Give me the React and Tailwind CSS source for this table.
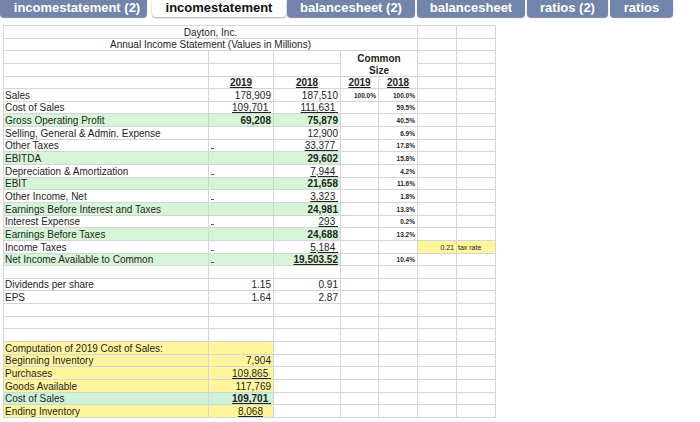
import React from 'react';

const GR = 'bg-[#d6f5d6]';
const GR2 = 'bg-[#cdf2d9]';
const YL = 'bg-[#fef59c]';

const tabs = [
  { t: 'incomestatement (2)', w: 'w-[147px] pl-[7px]', active: false },
  { t: 'incomestatement', w: 'w-[134px] ml-[5px]', active: true },
  { t: 'balancesheet (2)', w: 'w-[128px] ml-[1px]', active: false },
  { t: 'balancesheet', w: 'w-[108px] ml-[2px]', active: false },
  { t: 'ratios (2)', w: 'w-[81px] ml-[2px]', active: false },
  { t: 'ratios', w: 'w-[63px] ml-[2px]', active: false },
];

function Num({ t, b, u }) {
  return (
    <span className={`${b ? 'font-bold' : ''} ${u ? 'underline underline-offset-[1px] decoration-[#222]' : ''}`}>
      {t}
      {u ? '\u00a0' : ''}
    </span>
  );
}

function Pct({ t }) {
  return <span className="text-[6.5px] font-bold leading-[8px] pb-[1px]">{t}</span>;
}

function Dash() {
  return <span className="ml-[2px] mb-[2px] w-[3px] h-px bg-[#555]" />;
}

const E = (bg = '') => ({ bg });
const L = (t, bg = '') => ({ c: t, cls: 'pl-[1px]', bg });
const R = (c, bg = '') => ({ c, cls: 'justify-end pr-[2px]', bg });
const C = (c, bg = '') => ({ c, cls: 'justify-center', bg });
const D = (bg = '') => ({ c: <Dash />, bg });

const year = (y) => <span className="font-bold underline underline-offset-[1px]">{y}</span>;

function incomeRow(label, b, c, d, e, green) {
  const bg = green ? GR : '';
  return [
    L(label, bg),
    b === 'dash' ? D(bg) : b ? R(b, bg) : E(bg),
    c ? R(c, bg) : E(bg),
    d ? R(<Pct t={d} />) : E(),
    e ? R(<Pct t={e} />) : E(),
    E(),
    E(),
  ];
}

const empty = () => [E(), E(), E(), E(), E(), E(), E()];

const rows = [
  [{ span: 'col-span-5', c: 'Dayton, Inc.', cls: 'justify-center' }, E(), E()],
  [{ span: 'col-span-5', c: 'Annual Income Statement (Values in Millions)', cls: 'justify-center' }, E(), E()],
  [E(), E(), E(), { span: 'col-span-2', c: <span className="font-bold">Common</span>, cls: 'justify-center', nob: true }, E(), E()],
  [E(), E(), E(), { span: 'col-span-2', c: <span className="font-bold">Size</span>, cls: 'justify-center' }, E(), E()],
  [E(), C(year('2019')), C(year('2018')), C(year('2019')), C(year('2018')), E(), E()],
  incomeRow('Sales', <Num t="178,909" />, <Num t="187,510" />, '100.0%', '100.0%'),
  incomeRow('Cost of Sales', <Num t="109,701" u />, <Num t="111,631" u />, null, '59.5%'),
  incomeRow('Gross Operating Profit', <Num t="69,208" b />, <Num t="75,879" b />, null, '40.5%', true),
  incomeRow('Selling, General & Admin. Expense', null, <Num t="12,900" />, null, '6.9%'),
  incomeRow('Other Taxes', 'dash', <Num t="33,377" u />, null, '17.8%'),
  incomeRow('EBITDA', null, <Num t="29,602" b />, null, '15.8%', true),
  incomeRow('Depreciation & Amortization', 'dash', <Num t="7,944" u />, null, '4.2%'),
  incomeRow('EBIT', null, <Num t="21,658" b />, null, '11.6%', true),
  incomeRow('Other Income, Net', 'dash', <Num t="3,323" u />, null, '1.8%'),
  incomeRow('Earnings Before Interest and Taxes', null, <Num t="24,981" b />, null, '13.3%', true),
  incomeRow('Interest Expense', 'dash', <Num t="293" u />, null, '0.2%'),
  incomeRow('Earnings Before Taxes', null, <Num t="24,688" b />, null, '13.2%', true),
  [
    L('Income Taxes'),
    D(),
    R(<Num t="5,184" u />),
    E(),
    E(),
    R(<span className="text-[7px] leading-[9px] pb-[1px]">0.21</span>, YL),
    { c: <span className="text-[7px] leading-[9px] pb-[1px]">tax rate</span>, cls: 'pl-[1px]', bg: YL },
  ],
  incomeRow(
    'Net Income Available to Common',
    'dash',
    <span className="font-bold underline underline-offset-[1px] decoration-[#222]">19,503.52</span>,
    null,
    '10.4%',
    true
  ),
  empty(),
  [L('Dividends per share'), R('1.15'), R('0.91'), E(), E(), E(), E()],
  [L('EPS'), R('1.64'), R('2.87'), E(), E(), E(), E()],
  empty(),
  empty(),
  empty(),
  [L('Computation of 2019 Cost of Sales:', YL), E(YL), E(), E(), E(), E(), E()],
  [L('Beginning Inventory', YL), R(<Num t="7,904" />, YL), E(), E(), E(), E(), E()],
  [L('Purchases', YL), R(<Num t="109,865" u />, YL), E(), E(), E(), E(), E()],
  [L('Goods Available', YL), R(<Num t="117,769" />, YL), E(), E(), E(), E(), E()],
  [L('Cost of Sales', GR2), R(<Num t="109,701" b u />, GR2), E(), E(), E(), E(), E()],
  [
    L('Ending Inventory', YL),
    { c: <span className="underline underline-offset-[1px] decoration-[#222]">8,068</span>, cls: 'justify-end pr-[10px]', bg: YL },
    E(),
    E(),
    E(),
    E(),
    E(),
  ],
];

export default function App() {
  return (
    <div className="w-[700px] h-[422px] bg-white overflow-hidden font-['Liberation_Sans',Arial,sans-serif] text-[#1e1e1e]">
      <div className="flex h-[17px]">
        {tabs.map((t, i) => (
          <div
            key={i}
            className={`${t.w} h-[17px] flex items-end justify-center pb-[4px] rounded-b-[4px] text-[13px] leading-[11px] font-bold whitespace-nowrap ${
              t.active
                ? 'bg-white text-[#111] shadow-[0_1px_2px_rgba(0,0,0,0.35)]'
                : 'bg-[#7284a9] text-white shadow-[0_1px_1px_rgba(40,50,80,0.6)]'
            }`}
          >
            {t.t}
          </div>
        ))}
      </div>
      <div className="mt-[8px] ml-[3px] w-[493px] grid grid-cols-[205px_65px_67px_38px_39px_39px_39px] grid-rows-[repeat(31,12.65px)] border-l border-t border-[#d5d5d5] text-[10px] leading-[11px]">
        {rows.map((r, ri) =>
          r.map((cell, ci) => (
            <div
              key={`${ri}-${ci}`}
              className={`flex items-end whitespace-nowrap border-r border-[#d5d5d5] ${
                cell.nob ? '' : 'border-b'
              } ${cell.span || ''} ${cell.cls || ''} ${cell.bg || ''}`}
            >
              {cell.c}
            </div>
          ))
        )}
      </div>
    </div>
  );
}
